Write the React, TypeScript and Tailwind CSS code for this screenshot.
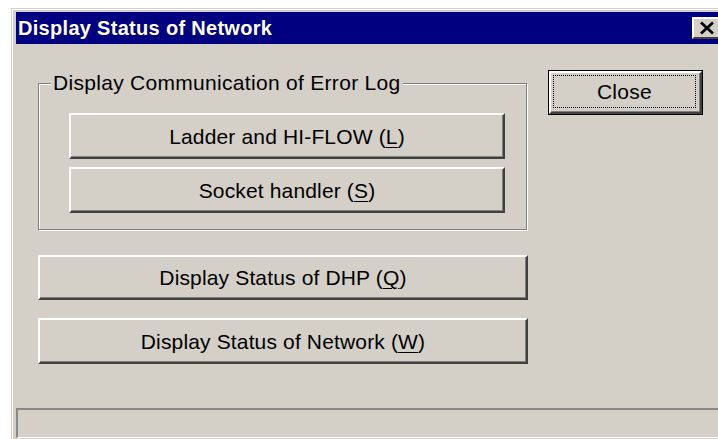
import type { ReactNode } from 'react';

const face = "font-['Liberation_Sans',Arial,sans-serif]";

// Classic raised 3D push button
function PushButton({ children, className = '' }: { children: ReactNode; className?: string }) {
  return (
    <button
      type="button"
      className={`flex items-center justify-center border-2 border-t-white border-l-white border-b-[#404040] border-r-[#404040] bg-[#d4d0c8] text-[21px] leading-none tracking-[0.15px] text-black shadow-[inset_-1px_-1px_0_#808080] ${className}`}
    >
      {children}
    </button>
  );
}

function Key({ children }: { children: ReactNode }) {
  return <span className="underline decoration-1 underline-offset-[3px]">{children}</span>;
}

export default function App() {
  return (
    <div className={`h-[439px] w-[718px] overflow-hidden bg-white pl-[11px] pt-[8px] ${face}`}>
      <div className="h-[440px] w-[716px] border-t border-l border-[#d4d0c8] bg-[#d4d0c8]">
        <div className="flex h-full flex-col border-t border-l border-white pt-[2px] pl-[3px] pr-[5px]">
          {/* title bar */}
          <div className="flex h-[32px] items-center bg-[#000080] pl-[2px]">
            <span className="text-[20px] font-bold tracking-[0.3px] text-white">
              Display Status of Network
            </span>
            <span className="ml-auto flex h-[22px] w-[30px] items-center justify-center border-2 border-t-white border-l-white border-b-[#404040] border-r-[#404040] bg-[#d4d0c8]">
              <svg width="18" height="14" viewBox="0 0 18 14">
                <path d="M3 1.5 L15 12.5 M15 1.5 L3 12.5" stroke="#000" strokeWidth="2.8" />
              </svg>
            </span>
          </div>

          <div className="flex">
            <div className="flex flex-col pl-[22px]">
              {/* error log group */}
              <div className="relative mt-[39px] h-[147px] w-[489px] border border-[#808080] shadow-[inset_1px_1px_0_#fff,1px_1px_0_#fff]">
                <span className="absolute top-[-13px] left-[12px] bg-[#d4d0c8] px-[2px] text-[21px] leading-[24px] tracking-[0.3px] text-black">
                  Display Communication of Error Log
                </span>
                <div className="flex flex-col gap-[8px] pt-[29px] pl-[30px]">
                  <PushButton className="h-[46px] w-[436px]">
                    Ladder and HI-FLOW (<Key>L</Key>)
                  </PushButton>
                  <PushButton className="h-[46px] w-[436px]">
                    Socket handler (<Key>S</Key>)
                  </PushButton>
                </div>
              </div>

              <PushButton className="mt-[25px] h-[45px] w-[490px]">
                Display Status of DHP (<Key>Q</Key>)
              </PushButton>
              <PushButton className="mt-[18px] h-[46px] w-[490px]">
                Display Status of Network (<Key>W</Key>)
              </PushButton>
            </div>

            {/* default button with focus rectangle */}
            <div className="mt-[26px] ml-[20px] h-[45px] w-[155px] border border-black">
              <button
                type="button"
                className="flex h-full w-full border-2 border-t-white border-l-white border-b-[#404040] border-r-[#404040] bg-[#d4d0c8] pt-[2px] pr-[4px] pb-[4px] pl-[2px] shadow-[inset_-1px_-1px_0_#808080]"
              >
                <span className="flex flex-1 items-center justify-center border border-dotted border-black text-[21px] leading-none tracking-[0.3px] text-black">
                  Close
                </span>
              </button>
            </div>
          </div>

          {/* status bar */}
          <div className="mt-[44px] h-[30px] border-t-2 border-l-2 border-b border-[#888888] border-b-white" />
        </div>
      </div>
    </div>
  );
}
